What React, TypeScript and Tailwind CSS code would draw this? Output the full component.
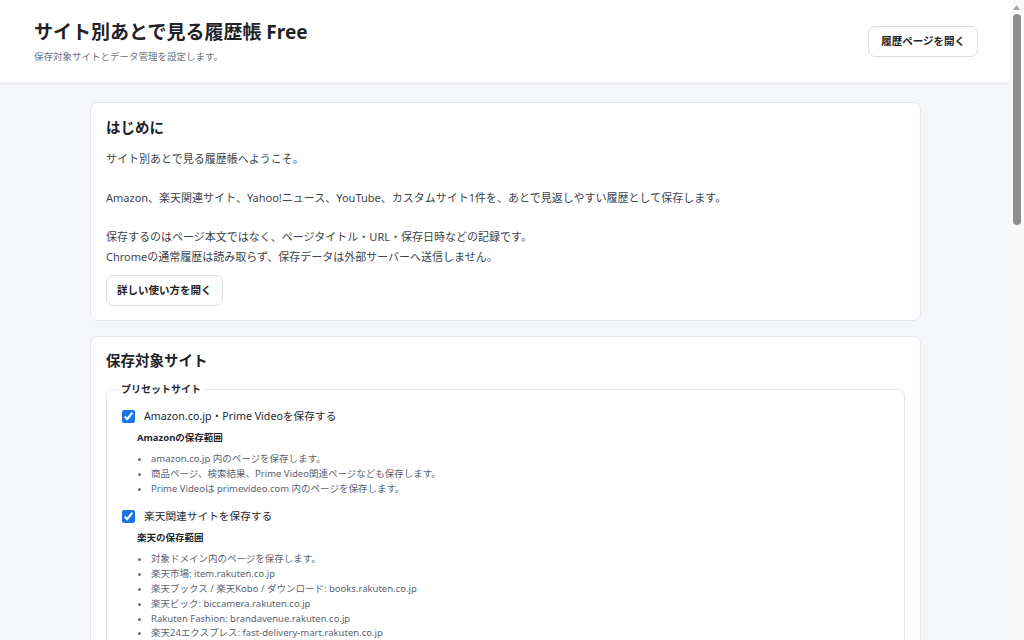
const amazonScope = [
  "amazon.co.jp 内のページを保存します。",
  "商品ページ、検索結果、Prime Video関連ページなども保存します。",
  "Prime Videoは primevideo.com 内のページを保存します。",
];

const rakutenScope = [
  "対象ドメイン内のページを保存します。",
  "楽天市場: item.rakuten.co.jp",
  "楽天ブックス / 楽天Kobo / ダウンロード: books.rakuten.co.jp",
  "楽天ビック: biccamera.rakuten.co.jp",
  "Rakuten Fashion: brandavenue.rakuten.co.jp",
  "楽天24エクスプレス: fast-delivery-mart.rakuten.co.jp",
  "楽天トラベル: travel.rakuten.co.jp",
];

const yahooScope = ["news.yahoo.co.jp 内のページを保存します。"];

function SiteOption({ label, scopeTitle, items }: { label: string; scopeTitle: string; items: string[] }) {
  return (
    <div>
      <label className="flex h-[24px] items-center gap-[9px] text-[10.7px] text-[#24292f]">
        <input type="checkbox" defaultChecked className="m-0 ml-[1px] h-[13px] w-[13px] accent-[#1a73e8]" />
        <span>{label}</span>
      </label>
      <div className="pl-[16px] pt-[3px]">
        <p className="text-[9.5px] font-bold leading-[14px] text-[#24292f]">{scopeTitle}</p>
        <ul className="mt-[7px] list-disc pl-[14px] text-[9.5px] leading-[14.8px] text-[#5b6370] marker:text-[#6b7280]">
          {items.map((t) => (
            <li key={t}>{t}</li>
          ))}
        </ul>
      </div>
    </div>
  );
}

export default function App() {
  return (
    <div className="flex h-[640px] overflow-hidden bg-[#f5f6f9] font-['Noto_Sans','Noto_Sans_CJK_JP',sans-serif] text-[#1f2328]">
      <div className="min-w-0 flex-1 overflow-hidden">
        <header className="flex h-[84px] items-start justify-between border-b border-[#e3e6eb] bg-white pl-[34px] pr-[31px]">
          <div className="pt-[19px]">
            <h1 className="text-[19px] font-bold leading-[26px] text-[#1f2328]">サイト別あとで見る履歴帳 Free</h1>
            <p className="mt-[5px] text-[9.5px] leading-[14px] text-[#6b7280]">保存対象サイトとデータ管理を設定します。</p>
          </div>
          <button className="mt-[26px] h-[31px] rounded-[7px] border border-[#d9dde3] bg-white px-[12px] text-[10.5px] font-bold text-[#1f2328]">
            履歴ページを開く
          </button>
        </header>

        <div className="pl-[2px]">
          <main className="mx-auto flex w-[831px] flex-col gap-[15px] pt-[18px]">
            <section className="rounded-[8px] border border-[#e3e6eb] bg-white px-[15px] pb-[14px] pt-[13px]">
              <h2 className="text-[14.5px] font-bold leading-[22px]">はじめに</h2>
              <p className="mt-[11px] whitespace-pre-line text-[11px] leading-[19.5px] text-[#3d434b]">
                {"サイト別あとで見る履歴帳へようこそ。\n\nAmazon、楽天関連サイト、Yahoo!ニュース、YouTube、カスタムサイト1件を、あとで見返しやすい履歴として保存します。\n\n保存するのはページ本文ではなく、ページタイトル・URL・保存日時などの記録です。\nChromeの通常履歴は読み取らず、保存データは外部サーバーへ送信しません。"}
              </p>
              <button className="mt-[9px] h-[31px] rounded-[7px] border border-[#d9dde3] bg-white px-[10px] text-[10.5px] font-bold text-[#1f2328]">
                詳しい使い方を開く
              </button>
            </section>

            <section className="rounded-[8px] border border-[#e3e6eb] bg-white px-[15px] pb-[15px] pt-[12px]">
              <h2 className="text-[14.5px] font-bold leading-[22px]">保存対象サイト</h2>
              <fieldset className="mt-[11px] rounded-[7px] border border-[#e3e6eb] px-[14px] pb-[12px] pt-[8px]">
                <legend className="ml-[-2px] px-[2px] text-[10px] font-bold leading-[14px] text-[#24292f]">プリセットサイト</legend>
                <div className="flex flex-col gap-[8px]">
                  <SiteOption label="Amazon.co.jp・Prime Videoを保存する" scopeTitle="Amazonの保存範囲" items={amazonScope} />
                  <SiteOption label="楽天関連サイトを保存する" scopeTitle="楽天の保存範囲" items={rakutenScope} />
                  <SiteOption label="Yahoo!ニュースを保存する" scopeTitle="Yahoo!ニュースの保存範囲" items={yahooScope} />
                </div>
              </fieldset>
            </section>
          </main>
        </div>
      </div>

      {/* page scrollbar */}
      <div className="flex w-[15px] shrink-0 flex-col items-center bg-[#f9f9f9]">
        <svg width="7" height="5" viewBox="0 0 7 5" className="mt-[5px]">
          <path d="M0 5 L3.5 0 L7 5 Z" fill="#a3a3a3" />
        </svg>
        <div className="mt-[4px] h-[211px] w-[8px] rounded-full bg-[#8f8f8f]" />
      </div>
    </div>
  );
}
